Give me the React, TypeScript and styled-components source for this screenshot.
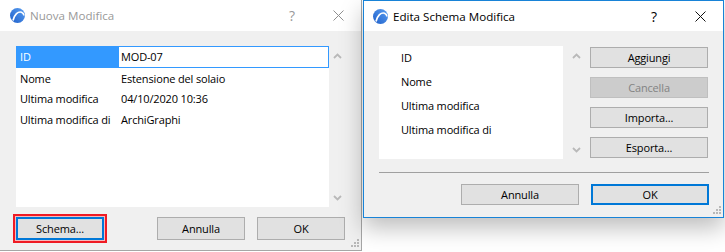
import React from 'react';
import styled, { createGlobalStyle, css } from 'styled-components';

const GlobalStyle = createGlobalStyle`
  html, body {
    margin: 0;
    padding: 0;
    background: #ffffff;
  }
  body {
    font-family: "Segoe UI", "Open Sans", "Liberation Sans", sans-serif;
    font-size: 11px;
    color: #000;
  }
  * {
    box-sizing: border-box;
  }
`;

const FIELDS = ['ID', 'Nome', 'Ultima modifica', 'Ultima modifica di'];

const VALUES: Record<string, string> = {
  ID: 'MOD-07',
  Nome: 'Estensione del solaio',
  'Ultima modifica': '04/10/2020 10:36',
  'Ultima modifica di': 'ArchiGraphi',
};

const Desktop = styled.div`
  display: flex;
  align-items: flex-start;
  gap: 1px;
  width: 725px;
  height: 252px;
  overflow: hidden;
  background: #ffffff;
`;

const Window = styled.div<{ $active?: boolean }>`
  position: relative;
  display: flex;
  flex-direction: column;
  flex-shrink: 0;
  background: #f0f0f0;
  ${(p) =>
    p.$active
      ? css`
          width: 361px;
          height: 218px;
          border: 1px solid #1883d7;
          box-shadow: 0 10px 22px rgba(0, 0, 0, 0.26);
        `
      : css`
          width: 362px;
          height: 251px;
          border-right: 1px solid #a6a6a6;
          border-bottom: 1px solid #a6a6a6;
        `}
`;

const TitleBar = styled.div<{ $active?: boolean }>`
  display: flex;
  align-items: center;
  height: ${(p) => (p.$active ? '30px' : '31px')};
  padding-left: ${(p) => (p.$active ? '9px' : '10px')};
  background: #ffffff;
  color: ${(p) => (p.$active ? '#000000' : '#999999')};
`;

const TitleText = styled.div`
  flex: 1;
  margin-left: 5px;
  font-size: 11.6px;
  white-space: nowrap;
`;

const CaptionButton = styled.div`
  display: flex;
  align-items: center;
  justify-content: center;
  width: 46px;
  height: 100%;
  font-size: 14px;
`;

const Body = styled.div<{ $active?: boolean }>`
  display: flex;
  flex-direction: column;
  flex: 1;
  letter-spacing: -0.15px;
  padding: ${(p) => (p.$active ? '15px 14px 0 15px' : '15px 16px 0 16px')};
`;

const ListArea = styled.div`
  display: flex;
  align-items: flex-start;
`;

const PropTable = styled.div`
  width: 313px;
  height: 161px;
  background: #ffffff;
`;

const PropRow = styled.div<{ $selected?: boolean; $h: number }>`
  display: grid;
  grid-template-columns: 103px 1fr;
  height: ${(p) => p.$h}px;
  line-height: ${(p) => p.$h}px;
  white-space: nowrap;
  ${(p) =>
    p.$selected &&
    css`
      border-top: 1px solid #3399ff;
    `}
`;

const PropLabel = styled.div<{ $selected?: boolean }>`
  padding-left: 4px;
  ${(p) =>
    p.$selected &&
    css`
      background: #3399ff;
      color: #ffffff;
      line-height: 20px;
    `}
`;

const PropValue = styled.div<{ $selected?: boolean }>`
  padding-left: 2px;
  ${(p) =>
    p.$selected &&
    css`
      border-right: 1px solid #3399ff;
      border-bottom: 1px solid #3399ff;
      line-height: 20px;
    `}
`;

const ScrollColumn = styled.div<{ $width: number; $height: number }>`
  display: flex;
  flex-direction: column;
  align-items: center;
  justify-content: space-between;
  width: ${(p) => p.$width}px;
  height: ${(p) => p.$height}px;
  padding: 7px 0 6px;
`;

const SchemaList = styled.div`
  width: 184px;
  height: 113px;
  background: #ffffff;
`;

const SchemaItem = styled.div`
  height: 24px;
  line-height: 24px;
  padding-left: 22px;
  white-space: nowrap;
`;

const SideButtons = styled.div`
  display: flex;
  flex-direction: column;
  gap: 9px;
  margin-top: 1px;
`;

const Button = styled.button<{ $w: number; $h: number; $default?: boolean }>`
  width: ${(p) => p.$w}px;
  height: ${(p) => p.$h}px;
  padding: 0;
  font-family: inherit;
  font-size: 11px;
  letter-spacing: inherit;
  color: #000;
  background: #e1e1e1;
  border: 1px solid #adadad;
  ${(p) =>
    p.$default &&
    css`
      border: 2px solid #0078d7;
    `}
  &:disabled {
    background: #cccccc;
    border-color: #bfbfbf;
    color: #838383;
  }
`;

const HighlightFrame = styled.div`
  margin: -4px;
  padding: 1px;
  border: 2px solid #ef1b24;
  box-shadow: inset 0 0 0 1px #f7b8bb;
`;

const Footer = styled.div<{ $active?: boolean }>`
  display: flex;
  align-items: center;
  gap: 12px;
  margin-top: ${(p) => (p.$active ? '11px' : '10px')};
  padding-left: ${(p) => (p.$active ? '0' : '1px')};
  justify-content: ${(p) => (p.$active ? 'flex-end' : 'flex-start')};
`;

const Spacer = styled.div`
  flex: 1;
`;

const Separator = styled.div`
  height: 1px;
  margin-top: 13px;
  background: #a0a0a0;
`;

const Grip = styled.svg`
  position: absolute;
  right: 2px;
  bottom: 3px;
`;

const Logo = () => (
  <svg width="15" height="15" viewBox="0 0 15 15">
    <defs>
      <linearGradient id="lg" x1="0" y1="1" x2="1" y2="0">
        <stop offset="0" stopColor="#1f5fc9" />
        <stop offset="1" stopColor="#5a9ff2" />
      </linearGradient>
    </defs>
    <circle cx="7.5" cy="7.5" r="7.5" fill="url(#lg)" />
    <path d="M3 12.5 C4.5 6.5 8 3.2 11.5 4.2 C13 4.7 13.8 6 14 7.5" fill="none" stroke="#ffffff" strokeWidth="1.7" />
  </svg>
);

const CloseIcon = ({ color }: { color: string }) => (
  <svg width="11" height="11" viewBox="0 0 11 11">
    <path d="M0.5 0.5 L10.5 10.5 M10.5 0.5 L0.5 10.5" stroke={color} strokeWidth="1" />
  </svg>
);

const Chevron = ({ up }: { up?: boolean }) => (
  <svg width="9" height="6" viewBox="0 0 9 6">
    <polyline
      points={up ? '1,5 4.5,1.5 8,5' : '1,1 4.5,4.5 8,1'}
      fill="none"
      stroke="#b9b9b9"
      strokeWidth="1.8"
    />
  </svg>
);

const ResizeGrip = () => (
  <Grip width="8" height="8" viewBox="0 0 8 8">
    <rect x="6" y="0" width="2" height="2" fill="#b8b8b8" />
    <rect x="3" y="3" width="2" height="2" fill="#b8b8b8" />
    <rect x="6" y="3" width="2" height="2" fill="#b8b8b8" />
    <rect x="0" y="6" width="2" height="2" fill="#b8b8b8" />
    <rect x="3" y="6" width="2" height="2" fill="#b8b8b8" />
    <rect x="6" y="6" width="2" height="2" fill="#b8b8b8" />
  </Grip>
);

const Caption = ({ title, active }: { title: string; active?: boolean }) => (
  <TitleBar $active={active}>
    <Logo />
    <TitleText>{title}</TitleText>
    <CaptionButton>?</CaptionButton>
    <CaptionButton>
      <CloseIcon color={active ? '#111111' : '#8f8f8f'} />
    </CaptionButton>
  </TitleBar>
);

const NewChangeDialog = () => (
  <Window>
    <Caption title="Nuova Modifica" />
    <Body>
      <ListArea>
        <PropTable>
          {FIELDS.map((f, i) => (
            <PropRow key={f} $selected={i === 0} $h={i === 0 ? 22 : i === 2 ? 20 : 21}>
              <PropLabel $selected={i === 0}>{f}</PropLabel>
              <PropValue $selected={i === 0}>{VALUES[f]}</PropValue>
            </PropRow>
          ))}
        </PropTable>
        <ScrollColumn $width={16} $height={161}>
          <Chevron up />
          <Chevron />
        </ScrollColumn>
      </ListArea>
      <Footer>
        <HighlightFrame>
          <Button $w={88} $h={23} $default>
            Schema...
          </Button>
        </HighlightFrame>
        <Spacer />
        <Button $w={88} $h={23}>
          Annulla
        </Button>
        <Button $w={88} $h={23}>
          OK
        </Button>
      </Footer>
    </Body>
    <ResizeGrip />
  </Window>
);

const EditSchemaDialog = () => (
  <Window $active>
    <Caption title="Edita Schema Modifica" active />
    <Body $active>
      <ListArea>
        <SchemaList>
          {FIELDS.map((f) => (
            <SchemaItem key={f}>{f}</SchemaItem>
          ))}
        </SchemaList>
        <ScrollColumn $width={27} $height={113}>
          <Chevron up />
          <Chevron />
        </ScrollColumn>
        <SideButtons>
          <Button $w={118} $h={21}>
            Aggiungi
          </Button>
          <Button $w={118} $h={21} disabled>
            Cancella
          </Button>
          <Button $w={118} $h={21}>
            Importa...
          </Button>
          <Button $w={118} $h={21}>
            Esporta...
          </Button>
        </SideButtons>
      </ListArea>
      <Separator />
      <Footer $active>
        <Button $w={118} $h={21}>
          Annulla
        </Button>
        <Button $w={118} $h={21} $default>
          OK
        </Button>
      </Footer>
    </Body>
    <ResizeGrip />
  </Window>
);

export default function App() {
  return (
    <>
      <GlobalStyle />
      <Desktop>
        <NewChangeDialog />
        <EditSchemaDialog />
      </Desktop>
    </>
  );
}
